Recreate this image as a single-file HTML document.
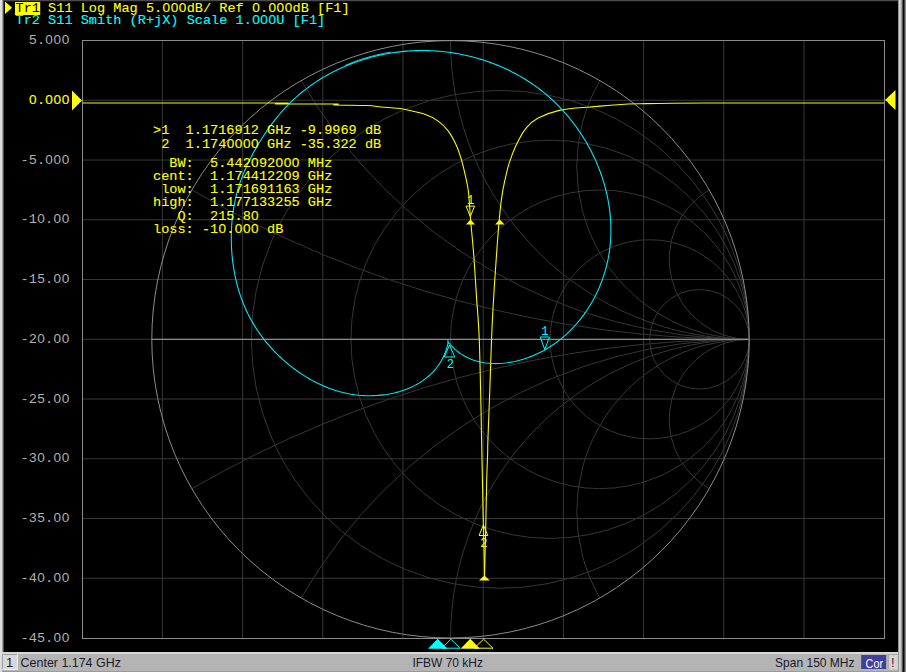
<!DOCTYPE html>
<html><head><meta charset="utf-8"><style>
html,body{margin:0;padding:0;background:#000;width:906px;height:672px;overflow:hidden}
svg{display:block}
.m{font-family:"Liberation Mono",monospace;font-size:13.58px;stroke-width:0.12px}
.mk{font-family:"Liberation Mono",monospace;font-size:12px}
.s{font-family:"Liberation Sans",sans-serif;font-size:13px}
</style></head><body>
<svg width="906" height="672" viewBox="0 0 906 672">
<rect x="0" y="0" width="906" height="672" fill="#000"/>
<rect x="0" y="0" width="906" height="1" fill="#4a4a4a"/>
<rect x="0" y="1" width="906" height="1" fill="#141414"/>
<rect x="0" y="0" width="2" height="672" fill="#dcdcdc"/>
<rect x="2" y="0" width="1" height="672" fill="#a0a0a0"/>
<rect x="3" y="0" width="1" height="672" fill="#4a4a4a"/>
<rect x="898" y="0" width="1" height="672" fill="#909090"/>
<rect x="899" y="0" width="1" height="672" fill="#d8d8d8"/>
<rect x="900" y="0" width="1" height="672" fill="#c4c4c4"/>
<rect x="901" y="0" width="1" height="672" fill="#a0a0a0"/>
<rect x="902" y="0" width="1" height="672" fill="#505050"/>
<rect x="903" y="0" width="1" height="672" fill="#0a0a0a"/>
<rect x="904" y="0" width="1" height="672" fill="#404040"/>
<rect x="905" y="0" width="1" height="672" fill="#909090"/>
<rect x="0" y="652" width="898" height="2" fill="#d8d8d8"/>
<rect x="0" y="654" width="898" height="18" fill="#b4b4b4"/>
<rect x="0" y="671" width="898" height="1" fill="#9a9a9a"/>
<rect x="0" y="652" width="2" height="20" fill="#dcdcdc"/>
<path d="M162.41,40.5 V638.5 M242.61,40.5 V638.5 M322.81,40.5 V638.5 M403.01,40.5 V638.5 M483.21,40.5 V638.5 M563.41,40.5 V638.5 M643.61,40.5 V638.5 M723.81,40.5 V638.5 M804.01,40.5 V638.5 M82.5,100.28 H884.5 M82.5,160.03 H884.5 M82.5,219.78 H884.5 M82.5,279.53 H884.5 M82.5,339.28 H884.5 M82.5,399.03 H884.5 M82.5,458.78 H884.5 M82.5,518.53 H884.5 M82.5,578.28 H884.5" stroke="#383838" stroke-width="1" fill="none"/>
<circle cx="500.28" cy="339.3" r="248.92" stroke="#363636" stroke-width="1" fill="none"/>
<circle cx="550.07" cy="339.3" r="199.13" stroke="#363636" stroke-width="1" fill="none"/>
<circle cx="599.85" cy="339.3" r="149.35" stroke="#363636" stroke-width="1" fill="none"/>
<circle cx="649.63" cy="339.3" r="99.57" stroke="#363636" stroke-width="1" fill="none"/>
<circle cx="699.42" cy="339.3" r="49.78" stroke="#363636" stroke-width="1" fill="none"/>
<path d="M191.82,189.95 A1114.76,1114.76 0 0,0 749.2,339.3 M191.82,488.65 A1114.76,1114.76 0 0,1 749.2,339.3 M301.15,80.62 A517.36,517.36 0 0,0 749.2,339.3 M301.15,597.98 A517.36,517.36 0 0,1 749.2,339.3 M450.5,40.6 A298.7,298.7 0 0,0 749.2,339.3 M450.5,638 A298.7,298.7 0 0,1 749.2,339.3 M599.85,80.62 A172.45,172.45 0 0,0 749.2,339.3 M599.85,597.98 A172.45,172.45 0 0,1 749.2,339.3 M709.18,189.95 A80.04,80.04 0 0,0 749.2,339.3 M709.18,488.65 A80.04,80.04 0 0,1 749.2,339.3" stroke="#363636" stroke-width="1" fill="none"/>
<path d="M151.8,339.3 H749.2" stroke="#8a8a8a" stroke-width="1.2" fill="none"/>
<circle cx="450.5" cy="339.3" r="298.7" stroke="#8c8c8c" stroke-width="1" fill="none"/>
<rect x="82.5" y="40.5" width="802" height="598" stroke="#8c8c8c" stroke-width="1" fill="none" shape-rendering="crispEdges"/>
<text x="28.75 36.9 45.35 53.5 61.65" y="44.03" font-family="Liberation Mono" font-size="13.58" fill="#b0b0b0">5.<tspan font-family="Liberation Sans">0</tspan><tspan font-family="Liberation Sans">0</tspan><tspan font-family="Liberation Sans">0</tspan></text>
<text x="29.05 36.9 45.35 53.5 61.65" y="103.78" font-family="Liberation Mono" font-size="13.58" fill="#ffff00" stroke="#ffff00" stroke-width="0.12"><tspan font-family="Liberation Sans">0</tspan>.<tspan font-family="Liberation Sans">0</tspan><tspan font-family="Liberation Sans">0</tspan><tspan font-family="Liberation Sans">0</tspan></text>
<text x="20.6 28.75 36.9 45.35 53.5 61.65" y="163.53" font-family="Liberation Mono" font-size="13.58" fill="#b0b0b0">-5.<tspan font-family="Liberation Sans">0</tspan><tspan font-family="Liberation Sans">0</tspan><tspan font-family="Liberation Sans">0</tspan></text>
<text x="20.6 28.75 37.2 45.05 53.5 61.65" y="223.28" font-family="Liberation Mono" font-size="13.58" fill="#b0b0b0">-1<tspan font-family="Liberation Sans">0</tspan>.<tspan font-family="Liberation Sans">0</tspan><tspan font-family="Liberation Sans">0</tspan></text>
<text x="20.6 28.75 36.9 45.05 53.5 61.65" y="283.03" font-family="Liberation Mono" font-size="13.58" fill="#b0b0b0">-15.<tspan font-family="Liberation Sans">0</tspan><tspan font-family="Liberation Sans">0</tspan></text>
<text x="20.6 28.75 37.2 45.05 53.5 61.65" y="342.78" font-family="Liberation Mono" font-size="13.58" fill="#b0b0b0">-2<tspan font-family="Liberation Sans">0</tspan>.<tspan font-family="Liberation Sans">0</tspan><tspan font-family="Liberation Sans">0</tspan></text>
<text x="20.6 28.75 36.9 45.05 53.5 61.65" y="402.53" font-family="Liberation Mono" font-size="13.58" fill="#b0b0b0">-25.<tspan font-family="Liberation Sans">0</tspan><tspan font-family="Liberation Sans">0</tspan></text>
<text x="20.6 28.75 37.2 45.05 53.5 61.65" y="462.28" font-family="Liberation Mono" font-size="13.58" fill="#b0b0b0">-3<tspan font-family="Liberation Sans">0</tspan>.<tspan font-family="Liberation Sans">0</tspan><tspan font-family="Liberation Sans">0</tspan></text>
<text x="20.6 28.75 36.9 45.05 53.5 61.65" y="522.03" font-family="Liberation Mono" font-size="13.58" fill="#b0b0b0">-35.<tspan font-family="Liberation Sans">0</tspan><tspan font-family="Liberation Sans">0</tspan></text>
<text x="20.6 28.75 37.2 45.05 53.5 61.65" y="581.78" font-family="Liberation Mono" font-size="13.58" fill="#b0b0b0">-4<tspan font-family="Liberation Sans">0</tspan>.<tspan font-family="Liberation Sans">0</tspan><tspan font-family="Liberation Sans">0</tspan></text>
<text x="20.6 28.75 36.9 45.05 53.5 61.65" y="641.53" font-family="Liberation Mono" font-size="13.58" fill="#b0b0b0">-45.<tspan font-family="Liberation Sans">0</tspan><tspan font-family="Liberation Sans">0</tspan></text>
<path d="M72,90.5 L82,100.5 L72,110.5 Z" fill="#ffff00"/>
<path d="M885,100 L895.5,90 L895.5,110 Z" fill="#ffff00"/>
<path d="M885.2,101.2 L887.6,101.8 L888,104.6 L886.2,105 Z" fill="#000"/>
<path d="M82.6,103 C115,103 244.6,102.83 277,103 C309.4,103.17 267.33,103.83 277,104 C286.67,104.17 325.33,103.83 335,104 C344.67,104.17 329.67,104.75 335,105 C340.33,105.25 359.33,105.17 367,105.5 C374.67,105.83 376.5,106.58 381,107 C385.5,107.42 390.15,107.63 394,108 C397.85,108.37 399.07,108.18 404.1,109.2 C409.13,110.22 418.52,112.12 424.2,114.1 C429.88,116.08 434.18,118.27 438.2,121.1 C442.22,123.93 445.28,127.08 448.3,131.1 C451.32,135.12 454.13,140.5 456.3,145.2 C458.47,149.9 459.8,154.28 461.3,159.3 C462.8,164.32 464.12,169.95 465.3,175.3 C466.48,180.65 467.52,183.95 468.4,191.4 C469.28,198.85 469.71,209.37 470.6,220 C471.49,230.63 472.78,242.63 473.75,255.2 C474.72,267.77 475.51,282.02 476.4,295.4 C477.29,308.78 478.4,319.73 479.1,335.5 C479.8,351.27 480.18,372.58 480.6,390 C481.02,407.42 481.22,421.17 481.6,440 C481.98,458.83 482.6,488.87 482.9,503 C483.2,517.13 483.17,515.3 483.4,524.8 C483.63,534.3 484.12,551.3 484.3,560 C484.48,568.7 484.47,574.17 484.5,577" stroke="#fafa00" stroke-width="1.1" fill="none" stroke-linejoin="round"/>
<path d="M484.5,577 C484.55,575 484.62,572.21 484.8,565 C484.98,557.79 485.28,547.92 485.6,533.75 C485.92,519.58 486.37,493.12 486.7,480 C487.03,466.88 487.4,461.67 487.6,455 C487.8,448.33 487.53,450.83 487.9,440 C488.27,429.17 489.17,407.42 489.8,390 C490.43,372.58 491.03,351.33 491.7,335.5 C492.37,319.67 493,308.42 493.8,295 C494.6,281.58 495.6,267.5 496.5,255 C497.4,242.5 498.28,229.93 499.2,220 C500.12,210.07 501.02,202.18 502,195.4 C502.98,188.62 503.92,184.65 505.1,179.3 C506.28,173.95 507.27,168.98 509.1,163.3 C510.93,157.62 513.27,151.07 516.1,145.2 C518.93,139.33 522.42,132.62 526.1,128.1 C529.78,123.58 532.5,121.1 538.2,118.1 C543.9,115.1 551.67,111.95 560.3,110.1 C568.93,108.25 584.05,107.6 590,107 C595.95,106.4 592.07,106.83 596,106.5 C599.93,106.17 606.27,105.45 613.6,105 C620.93,104.55 624.83,104.13 640,103.8 C655.17,103.47 663.87,103.13 704.6,103 C745.33,102.87 854.43,103 884.4,103" stroke="#fafa00" stroke-width="1.1" fill="none" stroke-linejoin="round"/>
<path d="M447.7,340.3 L448.51,342.51 L450.11,344.43 L451.77,346.25 L453.49,347.97 L455.25,349.59 L457.07,351.11 L458.93,352.53 L460.84,353.87 L462.8,355.1 L464.8,356.25 L466.83,357.31 L468.9,358.28 L471.01,359.16 L473.15,359.96 L475.32,360.67 L477.52,361.3 L479.74,361.86 L481.99,362.33 L484.26,362.72 L486.55,363.04 L488.85,363.28 L491.17,363.45 L493.5,363.55 L495.84,363.58 L498.19,363.54 L500.55,363.43 L502.91,363.26 L505.27,363.02 L507.63,362.72 L509.99,362.36 L512.34,361.94 L514.68,361.47 L517.01,360.93 L519.34,360.34 L521.64,359.7 L523.93,359.01 L526.2,358.26 L528.45,357.47 L530.68,356.63 L532.88,355.75 L535.06,354.81 L537.21,353.84 L539.34,352.82 L541.44,351.75 L543.52,350.65 L545.57,349.5 L547.59,348.31 L549.59,347.08 L551.56,345.81 L553.5,344.5 L555.42,343.15 L557.31,341.76 L559.17,340.34 L561,338.88 L562.8,337.39 L564.58,335.86 L566.32,334.3 L568.04,332.7 L569.73,331.07 L571.38,329.41 L573.01,327.72 L574.61,326 L576.17,324.25 L577.71,322.46 L579.21,320.65 L580.68,318.82 L582.12,316.95 L583.53,315.06 L584.91,313.15 L586.25,311.21 L587.57,309.24 L588.84,307.25 L590.09,305.24 L591.3,303.21 L592.48,301.16 L593.62,299.08 L594.73,296.99 L595.8,294.88 L596.84,292.75 L597.85,290.61 L598.82,288.45 L599.75,286.27 L600.64,284.08 L601.5,281.88 L602.33,279.67 L603.11,277.44 L603.86,275.2 L604.57,272.95 L605.25,270.7 L605.88,268.43 L606.48,266.16 L607.04,263.88 L607.56,261.59 L608.04,259.3 L608.48,257 L608.89,254.7 L609.25,252.39 L609.58,250.08 L609.88,247.76 L610.13,245.44 L610.35,243.12 L610.53,240.79 L610.68,238.47 L610.79,236.14 L610.86,233.81 L610.9,231.47 L610.91,229.14 L610.87,226.81 L610.81,224.48 L610.71,222.14 L610.57,219.81 L610.4,217.48 L610.2,215.15 L609.96,212.83 L609.69,210.5 L609.38,208.18 L609.05,205.86 L608.68,203.55 L608.28,201.24 L607.84,198.93 L607.37,196.63 L606.88,194.33 L606.35,192.04 L605.79,189.76 L605.19,187.48 L604.57,185.21 L603.92,182.95 L603.23,180.69 L602.52,178.44 L601.77,176.2 L601,173.97 L600.2,171.75 L599.37,169.54 L598.5,167.33 L597.61,165.14 L596.7,162.96 L595.75,160.79 L594.77,158.63 L593.77,156.48 L592.74,154.35 L591.69,152.23 L590.6,150.12 L589.49,148.02 L588.35,145.94 L587.19,143.87 L586,141.82 L584.78,139.78 L583.54,137.76 L582.28,135.75 L580.98,133.76 L579.67,131.79 L578.33,129.84 L576.96,127.9 L575.57,125.98 L574.16,124.07 L572.72,122.19 L571.26,120.32 L569.77,118.48 L568.27,116.65 L566.74,114.85 L565.18,113.06 L563.61,111.3 L562.01,109.56 L560.39,107.83 L558.75,106.14 L557.09,104.46 L555.41,102.81 L553.7,101.18 L551.98,99.57 L550.24,97.99 L548.47,96.43 L546.69,94.9 L544.88,93.39 L543.06,91.91 L541.22,90.45 L539.35,89.02 L537.47,87.62 L535.58,86.24 L533.66,84.88 L531.73,83.55 L529.78,82.24 L527.82,80.97 L525.83,79.71 L523.84,78.48 L521.82,77.28 L519.8,76.1 L517.75,74.95 L515.7,73.83 L513.62,72.73 L511.54,71.66 L509.44,70.61 L507.33,69.59 L505.2,68.59 L503.07,67.62 L500.92,66.68 L498.75,65.76 L496.58,64.87 L494.4,64.01 L492.2,63.17 L490,62.36 L487.78,61.57 L485.56,60.82 L483.33,60.08 L481.08,59.38 L478.83,58.7 L476.57,58.05 L474.3,57.42 L472.03,56.83 L469.74,56.25 L467.45,55.71 L465.16,55.19 L462.85,54.7 L460.54,54.24 L458.23,53.8 L455.91,53.39 L453.59,53.01 L451.26,52.66 L448.92,52.33 L446.58,52.03 L444.24,51.75 L441.9,51.51 L439.55,51.29 L437.2,51.1 L434.85,50.94 L432.49,50.8 L430.14,50.7 L427.78,50.62 L425.42,50.56 L423.06,50.54 L420.71,50.54 L418.35,50.58 L415.99,50.64 L413.63,50.72 L411.28,50.84 L408.92,50.98 L406.57,51.16 L404.22,51.36 L401.87,51.59 L399.53,51.84 L397.19,52.13 L394.85,52.44 L392.51,52.78 L390.18,53.15 L387.86,53.55 L385.54,53.97 L383.22,54.42 L380.92,54.9 L378.61,55.41 L376.32,55.94 L374.03,56.5 L371.75,57.09 L369.47,57.71 L367.21,58.35 L364.95,59.02 L362.7,59.72 L360.46,60.45 L358.23,61.2 L356.01,61.98 L353.8,62.79 L351.59,63.62 L349.4,64.48 L347.23,65.37 L345.06,66.28 L342.9,67.22 L340.76,68.19 L338.63,69.18 L336.51,70.2 L334.41,71.25 L332.32,72.32 L330.24,73.42 L328.18,74.55 L326.13,75.7 L324.1,76.88 L322.08,78.09 L320.08,79.32 L318.1,80.57 L316.13,81.86 L314.18,83.16 L312.24,84.5 L310.33,85.86 L308.43,87.24 L306.55,88.65 L304.69,90.08 L302.86,91.54 L301.04,93.03 L299.24,94.54 L297.46,96.07 L295.7,97.63 L293.97,99.21 L292.25,100.82 L290.56,102.45 L288.9,104.1 L287.25,105.78 L285.63,107.48 L284.03,109.2 L282.45,110.94 L280.89,112.71 L279.36,114.49 L277.85,116.3 L276.35,118.12 L274.88,119.96 L273.44,121.82 L272.01,123.7 L270.6,125.59 L269.21,127.5 L267.85,129.43 L266.5,131.37 L265.18,133.33 L263.87,135.29 L262.58,137.28 L261.32,139.27 L260.07,141.28 L258.84,143.3 L257.63,145.32 L256.44,147.36 L255.27,149.41 L254.12,151.47 L252.99,153.54 L251.88,155.62 L250.79,157.71 L249.73,159.8 L248.69,161.91 L247.67,164.03 L246.68,166.15 L245.71,168.29 L244.77,170.44 L243.86,172.59 L242.98,174.76 L242.13,176.94 L241.3,179.12 L240.51,181.32 L239.75,183.53 L239.02,185.74 L238.32,187.97 L237.66,190.21 L237.03,192.45 L236.44,194.71 L235.88,196.98 L235.36,199.25 L234.87,201.53 L234.41,203.82 L233.99,206.12 L233.59,208.43 L233.23,210.74 L232.9,213.06 L232.61,215.39 L232.34,217.72 L232.11,220.06 L231.9,222.4 L231.73,224.75 L231.58,227.1 L231.47,229.45 L231.38,231.81 L231.32,234.18 L231.29,236.54 L231.29,238.91 L231.32,241.27 L231.38,243.64 L231.46,246.01 L231.57,248.39 L231.71,250.75 L231.88,253.12 L232.08,255.49 L232.31,257.85 L232.57,260.22 L232.86,262.57 L233.18,264.93 L233.53,267.27 L233.91,269.62 L234.32,271.95 L234.76,274.28 L235.23,276.61 L235.73,278.92 L236.26,281.23 L236.83,283.52 L237.43,285.81 L238.06,288.09 L238.72,290.35 L239.42,292.61 L240.14,294.85 L240.9,297.08 L241.7,299.29 L242.52,301.5 L243.38,303.68 L244.28,305.85 L245.21,308.01 L246.17,310.15 L247.16,312.27 L248.19,314.37 L249.26,316.46 L250.36,318.53 L251.49,320.58 L252.65,322.61 L253.84,324.62 L255.07,326.62 L256.33,328.59 L257.62,330.54 L258.94,332.48 L260.28,334.39 L261.66,336.28 L263.07,338.15 L264.5,340 L265.97,341.83 L267.46,343.63 L268.98,345.41 L270.52,347.17 L272.1,348.91 L273.69,350.62 L275.32,352.32 L276.97,353.98 L278.64,355.62 L280.34,357.24 L282.06,358.83 L283.8,360.4 L285.57,361.95 L287.36,363.46 L289.17,364.95 L291.01,366.42 L292.86,367.86 L294.74,369.27 L296.64,370.65 L298.56,372.01 L300.49,373.33 L302.45,374.63 L304.43,375.89 L306.42,377.13 L308.44,378.33 L310.47,379.49 L312.52,380.63 L314.59,381.73 L316.68,382.79 L318.79,383.82 L320.91,384.81 L323.05,385.76 L325.21,386.68 L327.38,387.55 L329.57,388.39 L331.78,389.19 L334,389.94 L336.24,390.65 L338.49,391.32 L340.76,391.94 L343.04,392.52 L345.34,393.05 L347.65,393.54 L349.97,393.98 L352.31,394.37 L354.66,394.72 L357.02,395.01 L359.4,395.26 L361.79,395.45 L364.19,395.6 L366.59,395.69 L369,395.73 L371.41,395.72 L373.82,395.66 L376.23,395.55 L378.64,395.38 L381.04,395.16 L383.43,394.89 L385.81,394.57 L388.19,394.19 L390.54,393.76 L392.89,393.27 L395.21,392.73 L397.51,392.14 L399.79,391.49 L402.05,390.78 L404.28,390.02 L406.48,389.2 L408.65,388.33 L410.79,387.4 L412.89,386.42 L414.96,385.38 L416.99,384.28 L418.97,383.12 L420.92,381.91 L422.82,380.63 L424.67,379.3 L426.47,377.91 L428.22,376.47 L429.92,374.96 L431.56,373.39 L433.14,371.77 L434.66,370.08 L436.13,368.34 L437.52,366.53 L438.86,364.66 L440.12,362.73 L441.31,360.74 L442.43,358.69 L443.48,356.58 L444.45,354.41 L445.35,352.17 L446.16,349.87 L446.89,347.5 L447.53,345.08 L448.09,342.59 L447.7,340.3" stroke="#00e8f4" stroke-width="1.1" fill="none" stroke-linejoin="round"/>
<path d="M345.46,65.28 L347.63,64.37 L349.8,63.48 L351.99,62.62 L354.2,61.79 L356.41,60.98 L358.63,60.2 L360.86,59.45 L363.1,58.72 L365.35,58.02 L367.61,57.35 L369.87,56.71 L372.15,56.09 L374.43,55.5 L376.72,54.94 L379.01,54.41 L381.32,53.9 L383.62,53.42 L385.94,52.97 L388.26,52.55 L390.58,52.15" stroke="#00e8f4" stroke-width="0.9" fill="none" stroke-linejoin="round"/>
<path d="M466.05,206.1 L474.55,206.1 L470.3,216.6 Z" stroke="#ffff00" stroke-width="1" fill="none"/>
<text x="470.6" y="203.7" text-anchor="middle" class="mk" fill="#ffff00">1</text>
<path d="M470.5,219.5 L475,224.5 L466,224.5 Z" fill="#ffff00"/>
<path d="M499.8,219.5 L504.5,224.5 L495,224.5 Z" fill="#ffff00"/>
<path d="M483.4,525 L487.75,535.5 L479.05,535.5 Z" stroke="#ffff00" stroke-width="1" fill="none"/>
<text x="483.8" y="547" text-anchor="middle" class="mk" fill="#ffff00">2</text>
<path d="M484.4,575.5 L489.8,580.5 L479,580.5 Z" fill="#ffff00"/>
<path d="M540.15,337 L549.45,337 L544.8,349.6 Z" stroke="#00ffff" stroke-width="1" fill="none"/>
<text x="544.8" y="334.7" text-anchor="middle" class="mk" fill="#00ffff">1</text>
<path d="M449.5,345 L454.75,357 L444.25,357 Z" stroke="#00ffff" stroke-width="1" fill="none"/>
<text x="450.3" y="368" text-anchor="middle" class="mk" fill="#00ffff">2</text>
<path d="M437.7,638.7 L447.5,648.7 L428,648.7 Z" fill="#00ffff"/>
<path d="M450.9,639.2 L460.2,648.2 L441.6,648.2 Z" stroke="#00ffff" stroke-width="1" fill="none"/>
<path d="M470.3,638.7 L480,648.7 L460.5,648.7 Z" fill="#ffff00"/>
<path d="M483.6,639.2 L493,648.2 L474.2,648.2 Z" stroke="#ffff00" stroke-width="1" fill="none"/>
<text x="153 161.15 185.6 193.75 201.9 210.05 218.2 226.35 234.5 242.65 250.8 267.1 275.25 283.4 299.7 307.85 316 324.15 332.3 340.45 348.6 364.9 373.05" y="134.3" font-family="Liberation Mono" font-size="13.58" fill="#ffff00" stroke="#ffff00" stroke-width="0.12">&gt;11.1716912GHz-9.9969dB</text>
<text x="161.15 185.6 193.75 201.9 210.05 218.2 226.65 234.8 242.95 251.1 267.1 275.25 283.4 299.7 307.85 316 324.15 332.3 340.45 348.6 364.9 373.05" y="147.7" font-family="Liberation Mono" font-size="13.58" fill="#ffff00" stroke="#ffff00" stroke-width="0.12">21.174<tspan font-family="Liberation Sans">0</tspan><tspan font-family="Liberation Sans">0</tspan><tspan font-family="Liberation Sans">0</tspan><tspan font-family="Liberation Sans">0</tspan>GHz-35.322dB</text>
<text x="169.3 177.45 185.6 210.05 218.2 226.35 234.5 242.65 251.1 258.95 267.1 275.55 283.7 291.85 307.85 316 324.15" y="166.8" font-family="Liberation Mono" font-size="13.58" fill="#ffff00" stroke="#ffff00" stroke-width="0.12">BW:5.442<tspan font-family="Liberation Sans">0</tspan>92<tspan font-family="Liberation Sans">0</tspan><tspan font-family="Liberation Sans">0</tspan><tspan font-family="Liberation Sans">0</tspan>MHz</text>
<text x="153 161.15 169.3 177.45 185.6 210.05 218.2 226.35 234.5 242.65 250.8 258.95 267.1 275.25 283.7 291.55 307.85 316 324.15" y="180.02" font-family="Liberation Mono" font-size="13.58" fill="#ffff00" stroke="#ffff00" stroke-width="0.12">cent:1.1744122<tspan font-family="Liberation Sans">0</tspan>9GHz</text>
<text x="161.15 169.3 177.45 185.6 210.05 218.2 226.35 234.5 242.65 250.8 258.95 267.1 275.25 283.4 291.55 307.85 316 324.15" y="193.24" font-family="Liberation Mono" font-size="13.58" fill="#ffff00" stroke="#ffff00" stroke-width="0.12">low:1.171691163GHz</text>
<text x="153 161.15 169.3 177.45 185.6 210.05 218.2 226.35 234.5 242.65 250.8 258.95 267.1 275.25 283.4 291.55 307.85 316 324.15" y="206.46" font-family="Liberation Mono" font-size="13.58" fill="#ffff00" stroke="#ffff00" stroke-width="0.12">high:1.177133255GHz</text>
<text x="177.45 185.6 210.05 218.2 226.35 234.5 242.65 251.1" y="219.68" font-family="Liberation Mono" font-size="13.58" fill="#ffff00" stroke="#ffff00" stroke-width="0.12">Q:215.8<tspan font-family="Liberation Sans">0</tspan></text>
<text x="153 161.15 169.3 177.45 185.6 201.9 210.05 218.5 226.35 234.8 242.95 251.1 267.1 275.25" y="232.9" font-family="Liberation Mono" font-size="13.58" fill="#ffff00" stroke="#ffff00" stroke-width="0.12">loss:-1<tspan font-family="Liberation Sans">0</tspan>.<tspan font-family="Liberation Sans">0</tspan><tspan font-family="Liberation Sans">0</tspan><tspan font-family="Liberation Sans">0</tspan>dB</text>
<path d="M5,1.5 L12,7.75 L5,14 Z" fill="#ffff00"/>
<rect x="15" y="2" width="25.2" height="13" fill="#ffff00"/>
<text x="15.5 23.65 31.8" y="12" font-family="Liberation Mono" font-size="13.58" fill="#000">Tr1</text>
<text x="48.1 56.25 64.4 80.7 88.85 97 113.3 121.45 129.6 145.9 154.05 162.5 170.65 178.8 186.65 194.8 202.95 219.25 227.4 235.55 252.15 260 268.45 276.6 284.75 292.6 300.75 317.05 325.2 333.35 341.5" y="12" font-family="Liberation Mono" font-size="13.58" fill="#ffff00" stroke="#ffff00" stroke-width="0.12">S11LogMag5.<tspan font-family="Liberation Sans">0</tspan><tspan font-family="Liberation Sans">0</tspan><tspan font-family="Liberation Sans">0</tspan>dB/Ref<tspan font-family="Liberation Sans">0</tspan>.<tspan font-family="Liberation Sans">0</tspan><tspan font-family="Liberation Sans">0</tspan><tspan font-family="Liberation Sans">0</tspan>dB[F1]</text>
<text x="15.5 23.65 31.8 48.1 56.25 64.4 80.7 88.85 97 105.15 113.3 129.6 137.75 145.9 154.05 162.2 170.35 186.65 194.8 202.95 211.1 219.25 235.55 243.7 252.15 260.3 268.45 276.3 292.6 300.75 308.9 317.05" y="24" font-family="Liberation Mono" font-size="13.58" fill="#00ffff" stroke="#00ffff" stroke-width="0.12">Tr2S11Smith(R+jX)Scale1.<tspan font-family="Liberation Sans">0</tspan><tspan font-family="Liberation Sans">0</tspan><tspan font-family="Liberation Sans">0</tspan>U[F1]</text>
<rect x="2" y="654" width="15.5" height="15.5" fill="#d8d8d8"/>
<path d="M2.5,669 V654.5 H17" stroke="#a0a0a0" stroke-width="1" fill="none"/>
<path d="M2.5,669.5 H17.5 V654.5" stroke="#f0f0f0" stroke-width="1" fill="none"/>
<text x="9.5" y="667.3" class="s" text-anchor="middle" fill="#1a1a2a">1</text>
<text x="20.6" y="667.3" class="s" fill="#1a1a2a" textLength="100.3" lengthAdjust="spacingAndGlyphs">Center 1.174 GHz</text>
<text x="412.4" y="667.3" class="s" fill="#1a1a2a" textLength="70.6" lengthAdjust="spacingAndGlyphs">IFBW 70 kHz</text>
<text x="775.1" y="667.3" class="s" fill="#1a1a2a" textLength="79.4" lengthAdjust="spacingAndGlyphs">Span 150 MHz</text>
<rect x="861.2" y="655" width="24.9" height="14" fill="#40409a"/>
<text x="865.6" y="667.5" class="s" fill="#ffffff" textLength="17.4" lengthAdjust="spacingAndGlyphs">Cor</text>
<rect x="888" y="654" width="10" height="15.5" fill="#d4d4d4"/>
<path d="M888.5,669 V654.5 H897.5" stroke="#a8a8a8" stroke-width="1" fill="none"/>
<text x="892.8" y="667.3" class="s" text-anchor="middle" fill="#6a1040" font-size="12">!</text>
</svg>
</body></html>
